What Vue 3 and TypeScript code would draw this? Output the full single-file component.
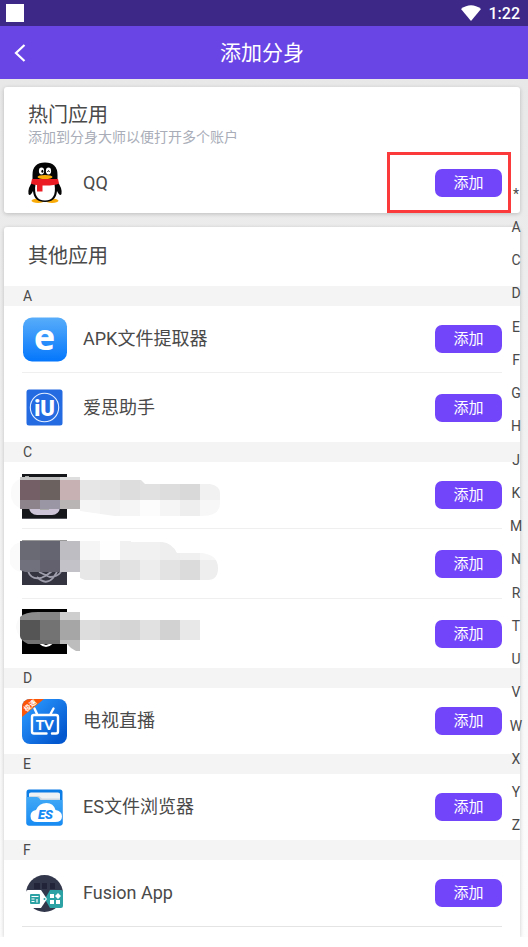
<script setup lang="ts">
interface AppItem {
  id: string
  name: string
  hidden?: boolean
}

interface Section {
  letter: string
  apps: AppItem[]
}

interface Block {
  x: number
  y: number
  w: number
  h: number
  fill: string
}

const sections: Section[] = [
  { letter: 'A', apps: [{ id: 'apk', name: 'APK文件提取器' }, { id: 'aisi', name: '爱思助手' }] },
  {
    letter: 'C',
    apps: [
      { id: 'c1', name: '', hidden: true },
      { id: 'c2', name: '', hidden: true },
      { id: 'c3', name: '', hidden: true },
    ],
  },
  { letter: 'D', apps: [{ id: 'tv', name: '电视直播' }] },
  { letter: 'E', apps: [{ id: 'es', name: 'ES文件浏览器' }] },
  { letter: 'F', apps: [{ id: 'fusion', name: 'Fusion App' }] },
]

const letters: string[] = '*ACDEFGHJKMNRTUVWXYZ'.split('')

function strip(y: number, h: number, fills: string[], x = 20): Block[] {
  return fills.map((fill, i) => ({ x: x + i * 20, y, w: 20, h, fill }))
}

const mosaic: Record<string, Block[]> = {
  c1: [
    ...strip(477, 3, ['#c4c4c4', '#bdbdbd', '#dedede']),
    ...strip(480, 20, ['#755f66', '#6b625f', '#c7b1b3', '#e6e6e6', '#e4e4e4', '#dddddd', '#e1e1e1', '#dddddd', '#d9d9d9', '#f1f1f1']),
    ...strip(500, 9, ['#8d838b', '#9a96a3', '#bab5b5']),
    ...strip(500, 16, ['#f5f5f5', '#f2f2f2', '#f5f5f5', '#fcfcfc', '#f5f5f5', '#eeeeee', '#f7f7f7'], 80),
  ],
  c2: [
    ...strip(541, 19, ['#6a6a74', '#656571', '#bebdc2', '#f5f5f5', '#fefefe', '#f1f1f1', '#f1f1f1', '#eeeeee', '#f0f0f0', '#f6f6f6']),
    ...strip(560, 12, ['#71717d', '#62616d', '#c3c2c8']),
    ...strip(560, 20, ['#e7e7e7', '#d9d9d9', '#e2e2e2', '#ededed', '#e3e3e3', '#dbdbdb', '#eeeeee'], 80),
  ],
  c3: [
    ...strip(612, 8, ['#8b8b8b', '#858585', '#cecece']),
    ...strip(620, 20, ['#555555', '#737373', '#a6a6a6', '#dddddd', '#d8d8d8', '#d5d5d5', '#e1e1e1', '#d2d2d2', '#e8e8e8']),
    ...strip(640, 4, ['#727272', '#6d6d6d', '#bdbdbd']),
  ],
}

const views: Record<string, string> = {
  c1: '10 465 212 60',
  c2: '10 534 212 60',
  c3: '10 604 212 60',
}
</script>

<template>
  <div class="screen">
    <div class="status">
      <span class="notice"></span>
      <svg class="wifi" width="20" height="16" viewBox="0 0 20 16" aria-hidden="true">
        <path d="M0 4Q10-3.500 20 4L10 16Z" fill="#fff" />
      </svg>
      <span>1:22</span>
    </div>
    <header class="bar">
      <button class="back" type="button" aria-label="返回">
        <svg width="12" height="18" viewBox="0 0 12 18" aria-hidden="true">
          <path d="M10.500 1L2 9L10.500 17" fill="none" stroke="#fff" stroke-width="2.200" />
        </svg>
      </button>
      <h1>添加分身</h1>
    </header>

    <main class="content">
      <section class="card hot">
        <div class="hot-head">
          <h2>热门应用</h2>
          <p>添加到分身大师以便打开多个账户</p>
        </div>
        <div class="row hot-row">
          <svg class="icon" viewBox="0 0 45 45" aria-hidden="true">
            <ellipse cx="16" cy="40.800" rx="6.500" ry="2.200" fill="#f9ab09" />
            <ellipse cx="30" cy="40.800" rx="6.500" ry="2.200" fill="#f9ab09" />
            <path d="M11 21Q5.500 28 6.500 34Q8 37 11 31Q12 42 23 42Q34 42 35 31Q38 37 39.500 34Q40.500 28 35 21Z" fill="#050505" />
            <path d="M10.500 21V15Q10.500 2.500 23 2.500Q35.500 2.500 35.500 15V21Z" fill="#050505" />
            <path d="M13.500 24H32.500Q35 40.500 23 40.500Q11 40.500 13.500 24Z" fill="#fff" />
            <path d="M10 19H36L37 23.500Q33 25.500 23 25.500Q13 25.500 9 23.500Z" fill="#eb1c23" />
            <path d="M15 24H20.500V31.500H15Z" fill="#eb1c23" />
            <ellipse cx="19.500" cy="11" rx="2.600" ry="3.400" fill="#fff" />
            <ellipse cx="26.500" cy="11" rx="2.600" ry="3.400" fill="#fff" />
            <ellipse cx="20.400" cy="11.300" rx="1" ry="1.500" fill="#000" />
            <path d="M25.400 12Q26.500 9 27.600 12" fill="none" stroke="#000" stroke-width=".9" />
            <ellipse cx="23" cy="17" rx="7.500" ry="2.100" fill="#f9ab09" />
          </svg>
          <span class="name">QQ</span>
          <button class="add" type="button">添加</button>
          <span class="marker"></span>
        </div>
      </section>

      <section class="card">
        <h2 class="others">其他应用</h2>
        <div v-for="section in sections" :key="section.letter">
          <h3>{{ section.letter }}</h3>
          <ul class="list">
            <li v-for="app in section.apps" :key="app.id" class="row">
              <svg v-if="app.hidden" class="masked" width="212" height="60" :viewBox="views[app.id]" aria-hidden="true">
                <defs>
                  <clipPath id="clip-c1">
                    <path d="M20 477H80V480H141L145 484H210Q220 486 220 493V503Q220 516 202 516H115L80 511L77 509H20Z" />
                  </clipPath>
                  <clipPath id="clip-c2">
                    <path d="M20 541H131V542H162Q172 543 177 553H202Q218 555 218 568Q218 580 208 580H85Q77 577 74 572H25L20 570Z" />
                  </clipPath>
                  <clipPath id="clip-c3">
                    <path d="M20 617Q25 612 38 612H200V644H28Q20 640 20 636Z" />
                  </clipPath>
                </defs>
                <template v-if="app.id === 'c1'">
                  <rect x="11" y="478" width="30" height="31" rx="14" fill="#fafafa" />
                  <rect x="22" y="474" width="45" height="45" fill="#15171b" />
                  <rect x="29" y="496" width="31" height="19" rx="8" fill="#cdc4d8" />
                  <path d="M25 476.500H29M40 509.500H49" stroke="#aaa" />
                  <path d="M22 518.500H67" stroke="#55555d" />
                </template>
                <template v-else-if="app.id === 'c2'">
                  <rect x="9" y="542" width="30" height="30" rx="14" fill="#fafafa" />
                  <rect x="22" y="540" width="45" height="45" fill="#343440" />
                  <path d="M22 540.500H67" stroke="#999" />
                  <path d="M28 571Q31 580 41 578Q47 576 52 571M37 577Q46 586 53 578L57 572M39 572L50 577Q57 577 61 572" fill="none" stroke="#9d9dac" stroke-width="1.800" />
                </template>
                <template v-else>
                  <rect x="16" y="615" width="30" height="24" rx="12" fill="#fafafa" />
                  <rect x="22" y="609" width="45" height="45" fill="#000" />
                  <path d="M40 643Q46 649 52 643" fill="none" stroke="#fff" stroke-width="2" />
                  <path d="M67 644H80V651H76Q70 648 67 644Z" fill="#bdbdbd" />
                </template>
                <g :clip-path="`url(#clip-${app.id})`" shape-rendering="crispEdges">
                  <rect v-for="(b, i) in mosaic[app.id]" :key="i" :x="b.x" :y="b.y" :width="b.w" :height="b.h" :fill="b.fill" />
                </g>
              </svg>

              <svg v-else-if="app.id === 'apk'" class="icon" viewBox="0 0 45 45" aria-hidden="true">
                <defs>
                  <linearGradient id="g-apk" x1="0" y1="0" x2="0" y2="1">
                    <stop offset="0" stop-color="#58adfa" />
                    <stop offset="1" stop-color="#0476fc" />
                  </linearGradient>
                </defs>
                <rect x="1" y="0.500" width="44" height="44" rx="9" fill="url(#g-apk)" />
                <text x="22.500" y="33" class="glyph-e">e</text>
              </svg>

              <svg v-else-if="app.id === 'aisi'" class="icon" viewBox="0 0 45 45" aria-hidden="true">
                <rect x="4.500" y="4.500" width="36" height="36" rx="2.500" fill="#246be2" />
                <circle cx="22.500" cy="22.500" r="14.200" fill="none" stroke="#e6efff" stroke-width="1.100" />
                <text x="22.500" y="30.500" class="glyph-iu">iU</text>
              </svg>

              <svg v-else-if="app.id === 'tv'" class="icon" viewBox="0 0 45 45" aria-hidden="true">
                <defs>
                  <linearGradient id="g-tv" x1="0" y1="0" x2="1" y2="1">
                    <stop offset="0.150" stop-color="#2894fb" />
                    <stop offset="0.850" stop-color="#0458cf" />
                  </linearGradient>
                  <clipPath id="clip-tv"><rect width="45" height="45" rx="8" /></clipPath>
                </defs>
                <g clip-path="url(#clip-tv)">
                  <rect width="45" height="45" fill="url(#g-tv)" />
                  <path d="M0 0H22L0 18Z" fill="#fb5607" />
                </g>
                <text x="8.500" y="9" transform="rotate(-40 8.500 7)" class="glyph-tag">极速</text>
                <path d="M24.500 34.500H12Q10 34.500 10 32.500V18Q10 16 12 16H34Q36 16 36 18V32.500Q36 34.500 34 34.500H30M15 15L12.500 9.500M28.500 15L31.500 9.500" fill="none" stroke="#fff" stroke-width="2.400" stroke-linecap="round" />
                <text x="22.800" y="30.500" class="glyph-tv">TV</text>
              </svg>

              <svg v-else-if="app.id === 'es'" class="icon" viewBox="0 0 45 45" aria-hidden="true">
                <defs>
                  <linearGradient id="g-es" x1="0" y1="0" x2="0" y2="1">
                    <stop offset="0" stop-color="#41a9f6" />
                    <stop offset="1" stop-color="#178bf3" />
                  </linearGradient>
                </defs>
                <rect x="4.500" y="4.500" width="36" height="36" rx="2.500" fill="#0c7de5" />
                <path d="M9 7.500H36Q38 7.500 38 9V18H7V9Q7 7.500 9 7.500Z" fill="#eef2f5" />
                <path d="M7 11H17L20 13.500H38V18H7Z" fill="#cfd9e2" />
                <path d="M4.500 12H15Q17 12 18.500 15H40.500V38Q40.500 40.500 38 40.500H7Q4.500 40.500 4.500 38Z" fill="url(#g-es)" />
                <path d="M15 37Q8.500 37 8.500 31Q8.500 26 14 25Q17 18 24.500 18Q31.500 18 33.500 25Q40 26 40 31.500Q40 37 33 37Z" fill="#fff" />
                <text x="23.500" y="34" class="glyph-es">ES</text>
              </svg>

              <svg v-else class="icon" viewBox="0 0 45 45" aria-hidden="true">
                <circle cx="22.500" cy="22.500" r="18.500" fill="#33374b" />
                <path d="M12 12H18V18H12ZM20 12H25V18H20ZM28 12H33V18H28Z" fill="#22253a" />
                <path d="M24 26L28 19H39Q41 19 41 21V35Q41 37 39 37H28L24 30Z" fill="#2da2a5" />
                <path d="M6 19H19L25 28L19 37H6Q4 37 4 35V21Q4 19 6 19Z" fill="#fff" />
                <rect x="8" y="23" width="10" height="10" rx="1" fill="#2da2a5" />
                <path d="M9.500 25.500H16.500M9.500 28H12.500M9.500 30.500H12.500M15 28V31.500" stroke="#fff" stroke-width="1.200" />
                <path d="M28 23H32V27H28ZM28 29H32V33H28ZM34 29H38V33H34ZM36 22L39 25L36 28L33 25Z" fill="#fff" />
                <circle cx="22.500" cy="28" r="1" fill="#2da2a5" />
              </svg>

              <span v-if="app.name" class="name">{{ app.name }}</span>
              <button class="add" type="button">添加</button>
            </li>
          </ul>
        </div>
      </section>
    </main>

    <nav class="index" aria-label="索引">
      <a v-for="letter in letters" :key="letter" href="#">{{ letter }}</a>
    </nav>
  </div>
</template>

<style>
body {
  margin: 0;
  background: #fff;
}
</style>

<style scoped>
.screen {
  position: relative;
  font-family: Roboto, "Noto Sans CJK SC", sans-serif;
  color: #4a4a4a;
  padding-bottom: 10px;
}

.status {
  display: flex;
  align-items: center;
  height: 26px;
  padding: 0 8px 0 6px;
  background: #3d2887;
  color: #fff;
  font-size: 16px;
  font-weight: 500;
  box-sizing: border-box;
}

.notice {
  width: 18px;
  height: 18px;
  background: #fff;
  margin-right: auto;
}

.wifi {
  margin-right: 8px;
}

.bar {
  display: grid;
  grid-template-columns: 40px 1fr 44px;
  align-items: center;
  height: 53px;
  background: #6a45e5;
  color: #fff;
}

.back {
  display: flex;
  justify-content: center;
  padding: 0;
  border: 0;
  background: none;
}

h1,
h2,
h3,
p,
ul {
  margin: 0;
  padding: 0;
  font-weight: 400;
}

h1 {
  font-size: 21px;
  line-height: 32px;
  text-align: center;
}

h2 {
  font-size: 20px;
  line-height: 28px;
}

.content {
  display: grid;
  gap: 14px;
  padding: 8px 8px 0 4px;
  background: linear-gradient(#e8e8e8, #fdfdfd);
}

.card {
  background: #fff;
  border-radius: 3px;
  box-shadow: 0 1px 4px rgba(0, 0, 0, 0.2);
}

.card:last-child {
  border-radius: 3px 3px 0 0;
  clip-path: inset(-8px -8px 0 -8px);
  padding-bottom: 10px;
}

.hot-head {
  padding: 14px 24px 0;
}

.hot-head p {
  color: #a9adb8;
  font-size: 14px;
  line-height: 17px;
}

.others {
  padding: 15px 24px 16px;
}

h3 {
  padding-left: 19px;
  background: #f4f4f4;
  font-size: 14px;
  line-height: 20px;
}

.list {
  list-style: none;
}

.row {
  display: flex;
  align-items: center;
  height: 66px;
  margin: 0 18px;
}

.row + .row {
  height: 69px;
  border-top: 1px solid #efefef;
}

.card > div:last-child .list::after {
  content: "";
  display: block;
  height: 1px;
  margin: 0 18px;
  background: #e4e4e4;
}

.hot-row {
  position: relative;
  height: 61px;
  padding-top: 6px;
}

.icon {
  width: 45px;
  height: 45px;
  flex: none;
  margin-right: 16px;
  overflow: visible;
}

.masked {
  flex: none;
  margin-left: -12px;
}

.name {
  font-size: 18px;
  line-height: 26px;
}

.add {
  width: 67px;
  height: 28px;
  margin-left: auto;
  padding: 0;
  border: 0;
  border-radius: 7px;
  background: #7345fa;
  color: #fff;
  font-family: inherit;
  font-size: 15px;
  line-height: 28px;
}

.marker {
  position: absolute;
  top: 6px;
  right: -9px;
  width: 118px;
  height: 55px;
  border: 3px solid #fb3a3c;
  pointer-events: none;
}

.index {
  position: absolute;
  top: 177px;
  right: 4px;
  bottom: 105px;
  width: 16px;
  display: flex;
  flex-direction: column;
}

.index a {
  flex: 1;
  display: flex;
  align-items: center;
  justify-content: center;
  color: #4a4a4a;
  font-size: 14px;
  line-height: 16px;
  text-decoration: none;
}

.glyph-e,
.glyph-iu,
.glyph-tv,
.glyph-tag,
.glyph-es {
  fill: #fff;
  text-anchor: middle;
  font-weight: 700;
}

.glyph-e {
  font-family: "Noto Sans", sans-serif;
  font-size: 36px;
}

.glyph-iu {
  font-size: 22px;
  font-weight: 900;
}

.glyph-tv {
  font-family: Lato, sans-serif;
  font-size: 14px;
  font-weight: 900;
}

.glyph-tag {
  font-size: 7px;
}

.glyph-es {
  fill: #178bf3;
  font-size: 13px;
  font-style: italic;
  font-weight: 900;
}
</style>
